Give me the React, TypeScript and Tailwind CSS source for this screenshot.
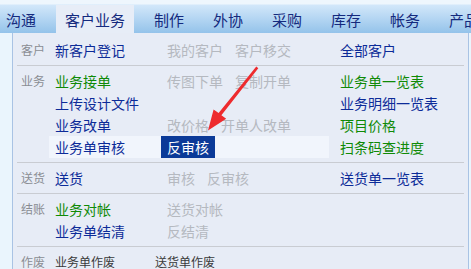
import React from 'react';

type Tone = 'blue' | 'green' | 'gray';

interface Item {
  text: string;
  tone: Tone;
  active?: boolean;
}

interface RowProps {
  label?: string;
  col1?: Item;
  col2?: Item[];
  col3?: Item;
  hover?: boolean;
}

const toneClass: Record<Tone, string> = {
  blue: 'text-[#0c2b98]',
  green: 'text-[#0f8a06]',
  gray: 'text-[#b5b9c0]',
};

const tabs = ['沟通', '客户业务', '制作', '外协', '采购', '库存', '帐务', '产品'];

const Row: React.FC<RowProps> = ({ label, col1, col2 = [], col3, hover }) => (
  <div className="flex h-[22px] items-center text-[14px] leading-[22px]">
    <div className="w-[36px] pl-[8px] text-[12px] text-[#8a8d93]">{label}</div>
    <div className={`flex h-[22px] w-[280px] ${hover ? 'bg-[#f1f5fc]' : ''}`}>
      <div className="w-[112px] pl-[6px]">
        {col1 && <span className={toneClass[col1.tone]}>{col1.text}</span>}
      </div>
      <div className="flex flex-1">
        {col2.map((it) => (
          <span
            key={it.text}
            className={`px-[6px] ${it.active ? 'bg-[#0b3a98] text-white' : toneClass[it.tone]}`}
          >
            {it.text}
          </span>
        ))}
      </div>
    </div>
    <div className="ml-[5px] pl-[6px]">
      {col3 && <span className={toneClass[col3.tone]}>{col3.text}</span>}
    </div>
  </div>
);

const Section: React.FC<{ children: React.ReactNode; first?: boolean; last?: boolean }> = ({
  children,
  first,
  last,
}) => (
  <>
    <div className={first ? 'pt-[6px] pb-[4px]' : 'py-[4px]'}>{children}</div>
    {!last && <div className="mx-[4px] h-px bg-[#c9ccd2]" />}
  </>
);

export default function App() {
  return (
    <div
      className="relative h-[269px] w-[471px] overflow-hidden bg-[#eaf5fd]"
      style={{ fontFamily: '"Noto Sans CJK SC", "Noto Sans", sans-serif' }}
    >
      {/* top menu bar */}
      <div className="flex h-[33px] items-end bg-[linear-gradient(to_bottom,#eef6fd_0px,#eef6fd_4px,#d2e7fa_5px,#94c3ea_33px)]">
        <div className="-ml-[3px] flex gap-[11px]">
          {tabs.map((t) => (
            <div
              key={t}
              className={`flex h-[28px] items-center whitespace-nowrap px-[9px] pt-[3px] text-[15px] text-[#142a7e] ${
                t === '客户业务' ? 'bg-[#e7edf7]' : ''
              }`}
            >
              {t}
            </div>
          ))}
        </div>
      </div>

      {/* dropdown panel */}
      <div className="ml-[12px] w-[457px] border-x border-[#a9c3e4] bg-[#e7ecf6]">
        <Section first>
          <Row
            label="客户"
            col1={{ text: '新客户登记', tone: 'blue' }}
            col2={[
              { text: '我的客户', tone: 'gray' },
              { text: '客户移交', tone: 'gray' },
            ]}
            col3={{ text: '全部客户', tone: 'blue' }}
          />
        </Section>
        <Section>
          <Row
            label="业务"
            col1={{ text: '业务接单', tone: 'green' }}
            col2={[
              { text: '传图下单', tone: 'gray' },
              { text: '复制开单', tone: 'gray' },
            ]}
            col3={{ text: '业务单一览表', tone: 'green' }}
          />
          <Row col1={{ text: '上传设计文件', tone: 'blue' }} col3={{ text: '业务明细一览表', tone: 'blue' }} />
          <Row
            col1={{ text: '业务改单', tone: 'blue' }}
            col2={[
              { text: '改价格', tone: 'gray' },
              { text: '开单人改单', tone: 'gray' },
            ]}
            col3={{ text: '项目价格', tone: 'green' }}
          />
          <Row
            hover
            col1={{ text: '业务单审核', tone: 'blue' }}
            col2={[{ text: '反审核', tone: 'gray', active: true }]}
            col3={{ text: '扫条码查进度', tone: 'green' }}
          />
        </Section>
        <Section>
          <Row
            label="送货"
            col1={{ text: '送货', tone: 'blue' }}
            col2={[
              { text: '审核', tone: 'gray' },
              { text: '反审核', tone: 'gray' },
            ]}
            col3={{ text: '送货单一览表', tone: 'blue' }}
          />
        </Section>
        <Section>
          <Row
            label="结账"
            col1={{ text: '业务对帐', tone: 'green' }}
            col2={[{ text: '送货对帐', tone: 'gray' }]}
          />
          <Row col1={{ text: '业务单结清', tone: 'blue' }} col2={[{ text: '反结清', tone: 'gray' }]} />
        </Section>
        <Section last>
          <div className="flex h-[22px] items-center text-[12px] leading-[22px]">
            <div className="w-[36px] pl-[8px] text-[#8a8d93]">作废</div>
            <span className="pl-[6px] text-[#3a3a3a]">业务单作废</span>
            <span className="ml-[40px] text-[#3a3a3a]">送货单作废</span>
          </div>
        </Section>
      </div>

      {/* red annotation arrow */}
      <svg className="pointer-events-none absolute inset-0" width="471" height="269" viewBox="0 0 471 269">
        <polygon
          points="256.3,66.4 258.3,68.2 221.4,115.2 226.2,118.8 208,130.5 213.6,109.4 218.6,112.9"
          fill="#ee2b2e"
        />
      </svg>
    </div>
  );
}
